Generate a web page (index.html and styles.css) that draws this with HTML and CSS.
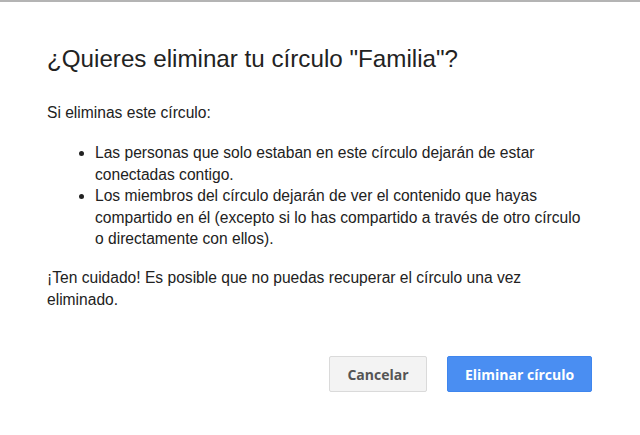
FILE: index.html
```html
<!DOCTYPE html>
<html lang="es">
<head>
<meta charset="utf-8">
<title>Eliminar círculo</title>
<link rel="stylesheet" href="styles.css">
</head>
<body>
<div class="topline"></div>
<div class="dialog">
  <h1 class="title">¿Quieres eliminar tu círculo "Familia"?</h1>
  <p class="intro">Si eliminas este círculo:</p>
  <ul class="points">
    <li>Las personas que solo estaban en este círculo dejarán de estar conectadas contigo.</li>
    <li>Los miembros del círculo dejarán de ver el contenido que hayas compartido en él (excepto si lo has compartido a través de otro círculo o directamente con ellos).</li>
  </ul>
  <p class="warning">¡Ten cuidado! Es posible que no puedas recuperar el círculo una vez eliminado.</p>
  <div class="actions">
    <button class="btn btn-cancel">Cancelar</button>
    <button class="btn btn-primary">Eliminar círculo</button>
  </div>
</div>
</body>
</html>
```
FILE: styles.css
```css
html, body {
  margin: 0;
  padding: 0;
  background: #ffffff;
}
body {
  width: 640px;
  height: 435px;
  overflow: hidden;
  font-family: "Liberation Sans", Arial, sans-serif;
  color: #222222;
}
.topline {
  height: 2px;
  background: #b4b4b4;
}
.dialog {
  display: flex;
  flex-direction: column;
  padding: 43px 48px 0 47px;
}
.title {
  margin: 0;
  font-size: 24.2px;
  font-weight: normal;
  line-height: 28px;
  color: #222222;
}
.intro {
  margin: 29px 0 0;
  font-size: 15.6px;
  line-height: 22px;
}
.points {
  margin: 18px 0 0;
  padding: 0 0 0 48px;
  font-size: 15.6px;
  line-height: 21.5px;
}
.points li {
  margin: 0;
}
.warning {
  margin: 17.5px 0 0;
  font-size: 15.6px;
  line-height: 21.5px;
}
.actions {
  display: flex;
  justify-content: flex-end;
  gap: 20px;
  margin-top: 46px;
}
.btn {
  height: 36px;
  border-radius: 2px;
  font-family: "Open Sans", Arial, sans-serif;
  font-weight: bold;
  font-size: 14px;
  padding: 0;
  box-sizing: border-box;
}
.btn-cancel {
  width: 98px;
  background: #f3f3f3;
  border: 1px solid #dadada;
  color: #555555;
}
.btn-primary {
  width: 145px;
  background: #4a8ef2;
  border: 1px solid #3f86ee;
  color: #ffffff;
}
```
